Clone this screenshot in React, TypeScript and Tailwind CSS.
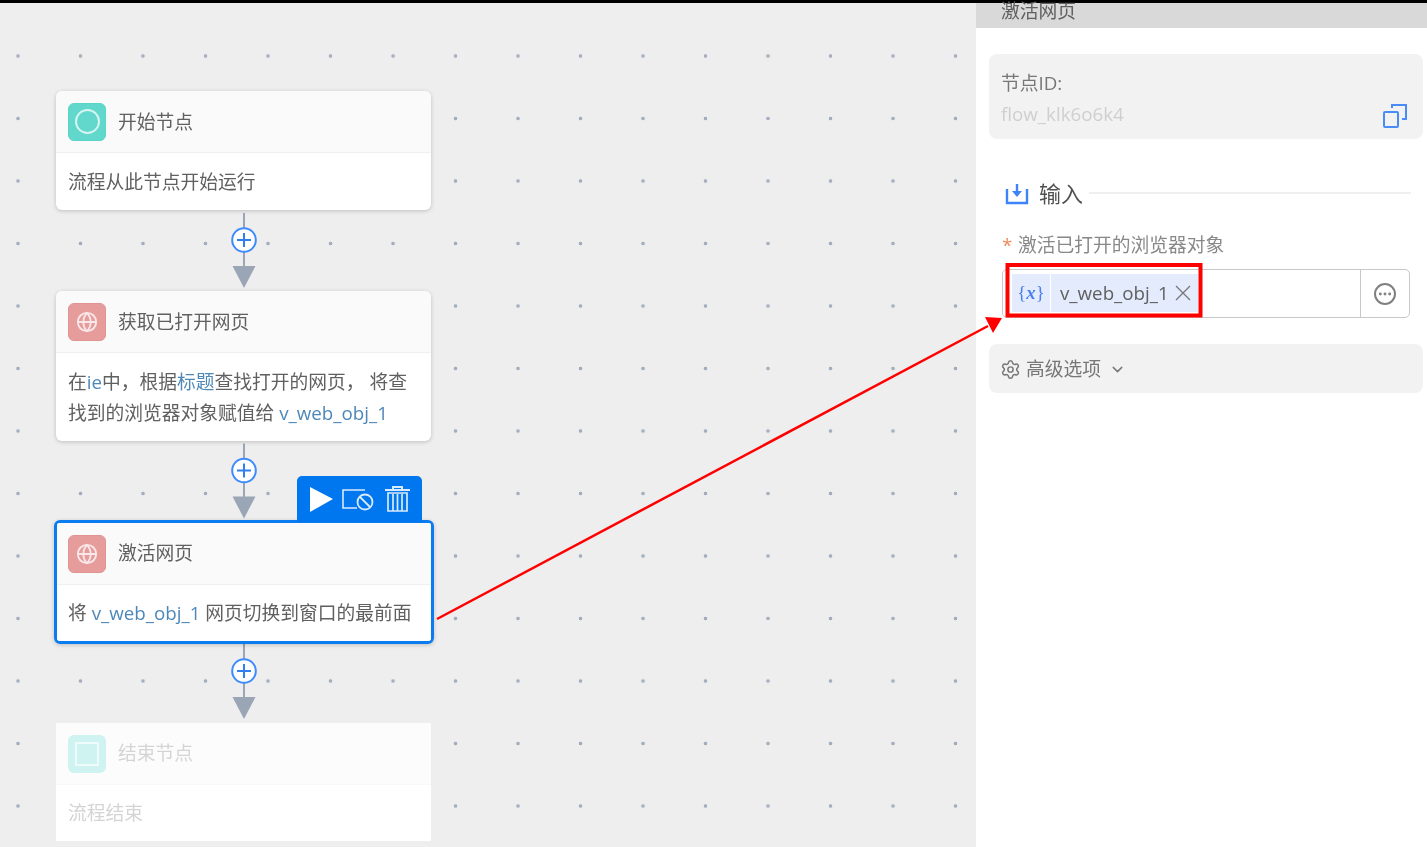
import { ChevronDown, Ellipsis, Globe, Settings } from "lucide-react";
import type { ReactNode } from "react";

const font = "font-['Open_Sans','Noto_Sans_CJK_SC',sans-serif]";

function Connector({ h, gap }: { h: number; gap: number }) {
  // drawn from the bottom so the arrow tip stays just above the next node
  const tip = h - gap;
  return (
    <svg width="30" height={h} viewBox={`0 0 30 ${h}`} className="block self-center">
      <line x1="15" y1={tip - 75} x2="15" y2={tip - 20} stroke="#9aa6b6" strokeWidth="2" />
      <path d={`M3.5 ${tip - 22} H26.5 L15 ${tip} Z`} fill="#9aa6b6" />
      <circle cx="15" cy={tip - 48} r="11.8" fill="#fff" stroke="#3d8bfd" strokeWidth="2" />
      <path d={`M8 ${tip - 48} H22 M15 ${tip - 55} V${tip - 41}`} stroke="#2f7ff0" strokeWidth="2" />
    </svg>
  );
}

function NodeIcon({ children, bg }: { children: ReactNode; bg: string }) {
  return <div className={`flex h-[38px] w-[38px] shrink-0 items-center justify-center rounded-[6px] ${bg}`}>{children}</div>;
}

function GlobeIcon() {
  return (
    <NodeIcon bg="bg-[#e79c9c] border border-[#e49393]">
      <Globe size={22} strokeWidth={2} className="text-[#fae8e8]" />
    </NodeIcon>
  );
}

function Var({ children }: { children: ReactNode }) {
  return <span className="text-[#4f88b8]">{children}</span>;
}

function NodeCard({ icon, title, children }: { icon: ReactNode; title: string; children: ReactNode }) {
  return (
    <div className="overflow-hidden rounded-[6px] bg-white shadow-[0_1px_4px_rgba(0,0,0,0.2)]">
      <div className="flex h-[62px] items-center gap-[12px] border-b border-[#f0f0f0] bg-[#fafafa] px-3">
        {icon}
        <span className="pt-[2px] text-[#606060]">{title}</span>
      </div>
      <div className="px-3 pb-[13px] pt-[13px] leading-[31px] text-[#606060]">{children}</div>
    </div>
  );
}

function Toolbar() {
  return (
    <div className="absolute bottom-[calc(100%+1px)] right-[9px] flex h-[46px] w-[125px] items-start justify-center rounded-t-[5px] bg-[#0077ee] pt-[9px]">
      <svg width="104" height="28" viewBox="0 0 104 28" fill="none">
        <path d="M2 2 L25 14 L2 27 Z" fill="#fff" />
        <path d="M57 5 H35 V23 H49" stroke="#d8eaff" strokeWidth="1.6" />
        <circle cx="57" cy="17" r="7.5" stroke="#d8eaff" strokeWidth="1.8" />
        <path d="M52 12 L62 22" stroke="#d8eaff" strokeWidth="1.8" />
        <path d="M77 5 H102 M85 5 V2 H94 V5" stroke="#d8eaff" strokeWidth="2" />
        <path d="M80 8 H99 V26 H80 Z M85 9 V26 M89.500 9 V26 M94 9 V26" stroke="#d8eaff" strokeWidth="1.700" />
      </svg>
    </div>
  );
}

function FlowCanvas() {
  return (
    <div className="w-[976px] bg-[#eeeeee] bg-[radial-gradient(circle,#a3adbe_1.4px,transparent_2.2px)] bg-[length:62.5px_62.5px] bg-[position:-13.25px_21.75px] pl-[56px] pt-[88px]">
      <div className="flex w-[375px] flex-col">
        <NodeCard
          title="开始节点"
          icon={
            <NodeIcon bg="bg-[#62d8cc] border border-[#5cd4c8]">
              <span className="h-[25px] w-[25px] rounded-full border-2 border-[#d6f5f1]" />
            </NodeIcon>
          }
        >
          流程从此节点开始运行
        </NodeCard>
        <Connector h={81} gap={3} />
        <NodeCard title="获取已打开网页" icon={<GlobeIcon />}>
          在<Var>ie</Var>中，根据<Var>标题</Var>查找打开的网页， 将查
          <br />
          找到的浏览器对象赋值给 <Var>v_web_obj_1</Var>
        </NodeCard>
        <Connector h={79} gap={1.5} />
        <div className="relative mx-[-2px] w-[380px] rounded-[6px] border-[3px] border-[#0a7cf0] shadow-[0_1px_4px_rgba(0,0,0,0.2)]">
          <Toolbar />
          <div className="overflow-hidden rounded-[3px] bg-white">
            <div className="flex h-[62px] items-center gap-[12px] border-b border-[#f0f0f0] bg-[#fafafa] pl-[11px]">
              <GlobeIcon />
              <span className="text-[#606060]">激活网页</span>
            </div>
            <div className="h-[56px] whitespace-nowrap pl-[11px] pt-[12px] leading-[31px] text-[#606060]">
              将 <Var>v_web_obj_1</Var> 网页切换到窗口的最前面
            </div>
          </div>
        </div>
        <Connector h={79} gap={4} />
        <div className="h-[118px] bg-white">
          <div className="flex h-[62px] items-center gap-[12px] border-b border-[#f8f8f8] bg-[#fcfcfc] px-3">
            <NodeIcon bg="bg-[#cff3f0]">
              <span className="h-[24px] w-[24px] border-2 border-[#eefbfa]" />
            </NodeIcon>
            <span className="text-[#d4d4d4]">结束节点</span>
          </div>
          <div className="px-3 pt-[12px] leading-[31px] text-[#d4d4d4]">流程结束</div>
        </div>
      </div>
    </div>
  );
}

function PropertyPanel() {
  return (
    <div className="flex-1 bg-white">
      <div className="flex h-[25px] items-center bg-[#d9d9d9] pb-[8px] pl-[25px] leading-none text-[#606060]">激活网页</div>
      <div className="pl-[13px] pr-[4px] pt-[26px]">
        <div className="relative h-[85px] rounded-[8px] bg-[#f2f2f2] px-[12px] pt-[14px]">
          <div className="leading-[30px] text-[#777]">节点ID:</div>
          <div className="leading-[32px] text-[#cfcfcf]">flow_klk6o6k4</div>
          <svg width="24" height="24" viewBox="0 0 24 24" fill="none" stroke="#4a8cf7" strokeWidth="2" className="absolute bottom-[11px] right-[16px]">
            <rect x="1" y="8" width="14" height="15" rx="1" />
            <path d="M9 4 V1 H23 V15 H19" />
          </svg>
        </div>
        <div className="mt-[41px] flex h-[27px] items-center pl-[16px] pr-[12px]">
          <svg width="24" height="22" viewBox="0 0 24 22" fill="none">
            <path d="M2 6 V20 H22 V6" stroke="#3f83f8" strokeWidth="2.400" />
            <path d="M12 1 V10" stroke="#3f83f8" strokeWidth="2.400" />
            <path d="M7 8 H17 L12 14 Z" fill="#3f83f8" />
          </svg>
          <span className="ml-[10px] text-[22px] text-[#505050]">输入</span>
          <div className="ml-[6px] mb-[2px] h-[2px] flex-1 bg-[#efefef]" />
        </div>
        <div className="mt-[25px] flex h-[26px] items-center pl-[13px] text-[#888]">
          <span className="w-[16px] text-[#f08a5d]">*</span>
          激活已打开的浏览器对象
        </div>
        <div className="relative ml-[13px] mr-[13px] mt-[11px] flex h-[49px] rounded-[5px] border border-[#c8c8c8]">
          <div className="ml-[9px] mt-[4px] flex h-[38px] w-[186px] items-center bg-[#e3ebfd]">
            <span className="flex h-full w-[39px] items-center justify-center border-r border-white font-['Liberation_Serif',serif] text-[#4a80f0]">
              {"{"}
              <i className="font-bold">x</i>
              {"}"}
            </span>
            <span className="ml-[9px] text-[#606060]">v_web_obj_1</span>
            <svg width="16" height="16" viewBox="0 0 16 16" stroke="#777" strokeWidth="1.3" className="ml-[6px]">
              <path d="M1 1 L15 15 M15 1 L1 15" />
            </svg>
          </div>
          <div className="ml-auto flex w-[49px] items-center justify-center border-l border-[#c8c8c8]">
            <span className="flex h-[22px] w-[22px] items-center justify-center rounded-full border-2 border-[#808080]">
              <Ellipsis size={16} strokeWidth={2.4} className="text-[#808080]" />
            </span>
          </div>
        </div>
        <div className="mt-[26px] flex h-[49px] items-center rounded-[8px] bg-[#f2f2f2] pl-[11px] pt-[1px] text-[#777]">
          <Settings size={21} strokeWidth={1.7} className="mr-[5px]" />
          高级选项
          <ChevronDown size={17} strokeWidth={2} className="ml-[8px]" />
        </div>
      </div>
    </div>
  );
}

export default function App() {
  return (
    <div className={`relative h-[847px] w-[1427px] overflow-hidden bg-white text-[18.75px] blur-[0.45px] ${font}`}>
      <div className="h-[3px] bg-[#000]" />
      <div className="flex h-[844px]">
        <FlowCanvas />
        <PropertyPanel />
      </div>
      {/* red annotation drawn over the screenshot */}
      <svg className="absolute inset-0" width="1427" height="847" fill="none">
        <path d="M437 619 L988 326" stroke="#f00" strokeWidth="2.500" />
        <path d="M1002 318 L985 317 L993 333 Z" fill="#f00" />
        <rect x="1007.500" y="265" width="193" height="50.500" stroke="#f00" strokeWidth="4" />
      </svg>
    </div>
  );
}
